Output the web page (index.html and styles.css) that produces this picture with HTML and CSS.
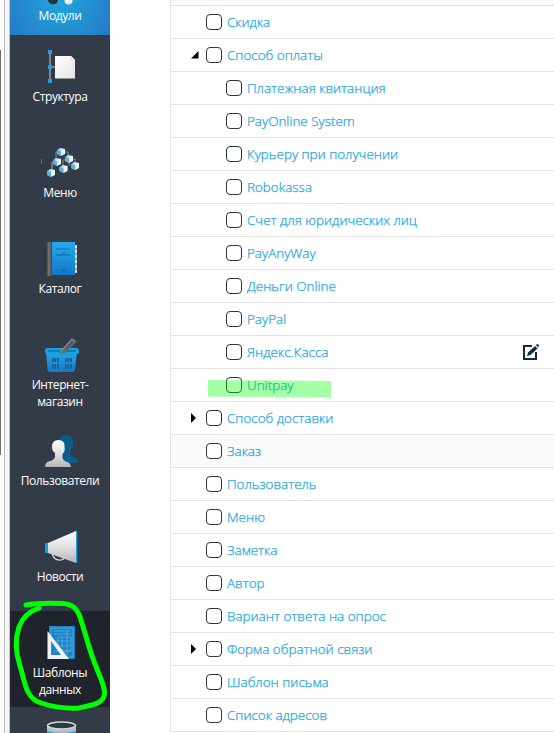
FILE: index.html
```html
<!DOCTYPE html>
<html lang="ru">
<head>
<meta charset="utf-8">
<title>Шаблоны данных</title>
<link rel="stylesheet" href="styles.css">
</head>
<body>
<svg class="defs" width="0" height="0" aria-hidden="true">
  <defs>
    <linearGradient id="blue" x1="0" y1="0" x2="0" y2="1"><stop offset="0" stop-color="#27aaf0"/><stop offset="1" stop-color="#1478c4"/></linearGradient>
    <linearGradient id="cube" x1="0" y1="0" x2="1" y2="0"><stop offset="0" stop-color="#4fa9d6"/><stop offset=".6" stop-color="#d9effb"/><stop offset="1" stop-color="#fff"/></linearGradient>
    <linearGradient id="silver" x1="0" y1="0" x2="0" y2="1"><stop offset="0" stop-color="#fff"/><stop offset=".55" stop-color="#ddd"/><stop offset="1" stop-color="#b5b5b5"/></linearGradient>
    <linearGradient id="page" x1="0" y1="0" x2="1" y2="1"><stop offset="0" stop-color="#fff"/><stop offset="1" stop-color="#e4e4e4"/></linearGradient>
    <linearGradient id="steel" x1="0" y1="0" x2="1" y2="0"><stop offset="0" stop-color="#333"/><stop offset=".5" stop-color="#777"/><stop offset="1" stop-color="#444"/></linearGradient>
    <g id="box"><path d="M0 2 3 0 8 1 8 6 4 8 0 6z" fill="url(#cube)"/><path d="M0 2 4 3.4 4 8 0 6z" fill="#5bafd8"/></g>
  </defs>
</svg>
<div class="layout">
  <div class="rail"><div class="rail-thumb"></div></div>
  <div class="edge"></div>
  <nav class="sidebar">
    <a class="item current"><svg class="icon" viewBox="0 0 40 40"><circle cx="13" cy="22.500" r="5" fill="#263441"/><circle cx="28.500" cy="23.500" r="4" fill="#eee"/><path d="M24 20.500h6v2h-6z" fill="#333"/></svg><span>Модули</span></a>
    <a class="item"><svg class="icon" viewBox="0 0 40 40"><path d="M10 7v26M10 20h6" stroke="#999ca1" stroke-width="1.500"/><path d="M8 3h4v4H8zM8 18h4v4H8zM8 32h4v4H8z" fill="#18a4e5"/><path d="M15 9h16l4 4v18.500H15z" fill="url(#page)"/><path d="M31 9v4h4z" fill="#fff" stroke="#bbb" stroke-width=".5"/></svg><span>Структура</span></a>
    <a class="item"><svg class="icon" viewBox="0 0 40 40"><path d="M1.500 16v5" stroke="#7c828c" stroke-width=".7"/><g transform="translate(0 3)"><path d="M16 13V6h12v6M12 23v-7h4v-3M12 16v8M23 20v-6h6v6M29 13h6v7" fill="none" stroke="#848991"/><use href="#box" x="17" y="2"/><use href="#box" x="13" y="12"/><use href="#box" x="25" y="9"/><use href="#box" x="7" y="23"/><use href="#box" x="19.500" y="19"/><use href="#box" x="31" y="16"/></g></svg><span>Меню</span></a>
    <a class="item"><svg class="icon" viewBox="0 0 40 40"><path d="M34 6h3v28h-3z" fill="#ddd"/><path d="M34 10h3M34 15h3M34 20h3M34 25h3M34 30h3" stroke="#65717a"/><path d="M6 3h6v34H6z" fill="url(#steel)"/><path d="M12 3h23v33H12z" fill="url(#blue)"/><path d="M16 10h14M22 14h3M16 16h14M21 31h5M22 33h3" stroke="#096299" stroke-width=".9"/></svg><span>Каталог</span></a>
    <a class="item"><svg class="icon" viewBox="0 0 40 40"><path d="M6 16h31l-2 19q-.5 2-3 2H11q-3 0-3.500-2z" fill="url(#blue)"/><path d="M5 15q0-2 3-2h28q3 0 3 3v2q-3 2-6 2H10q-4 0-5-3z" fill="#14a5df"/><path d="M8 15h28v2H8z" fill="#087db8"/><path d="M12 23h7v4h-7zM25 23h7v4h-7zM12 29h7v5h-7zM25 29h7v5h-7z" fill="#1a5f93"/><path d="M14 22v13M16.500 22v13M27 22v13M29.500 22v13" stroke="#2794da" stroke-width=".7"/><path d="M20 18 32 5l3 2-12 11" fill="none" stroke="#66676a" stroke-width="2.500"/><path d="M20 17 32 4l3 2" fill="none" stroke="#aaa" stroke-width=".8"/></svg><span>Интернет-<br>магазин</span></a>
    <a class="item"><svg class="icon" viewBox="0 0 40 40"><g transform="translate(0 2)"><path d="M19 8q1-6 8-6 6 0 6 7 1 4-2 7l-1 4q0 3 5 5 4 1 3 5H20z" fill="#075e8a"/><path d="M12 14q0-7 6.500-7t6 7q1 4-2 7v4q1 3 5 4 3 1 3.500 5H5q0-5 5-6 4-1 5-4v-4q-3-2-3-6z" fill="url(#silver)"/></g></svg><span>Пользователи</span></a>
    <a class="item"><svg class="icon" viewBox="0 0 40 40"><path d="M12 26q2 8 9 7 4-1 5-5" fill="none" stroke="#ddd" stroke-width="1.200"/><path d="M8 16 36 4v32L8 26z" fill="url(#silver)"/><path d="M5 16h3v10H5zM36 4h1.300v32H36z" fill="#10a1df"/></svg><span>Новости</span></a>
    <a class="item active"><svg class="icon" viewBox="0 0 40 40"><path d="M9 3h26v33H9z" fill="#1b84c9"/><path d="M11 5h22v29H11zM14 8h17M14 11h17M18 14h13v14H18zM22 14v17M27 8v24M14 18h17M14 23h17M14 28h17" fill="none" stroke="#68b1df" stroke-width=".7"/><path fill-rule="evenodd" d="M7.500 8 29 36H7.500zm3.500 10v14h10z" fill="#f2f2f2"/></svg><span>Шаблоны<br>данных</span></a>
    <a class="item"><svg class="icon" viewBox="0 0 40 40"><path d="M7 6h29v34H7z" fill="#12aae3"/><path d="M7 7v5q14 4 29 0V7z" fill="#bbb"/><ellipse cx="21.500" cy="6.500" rx="14" ry="3.500" fill="#273b46" stroke="#d4d9dc" stroke-width="1.500"/></svg></a>
  </nav>
  <main class="tree">
    <div class="tree-head"></div>
    <div class="row"><i class="arrow"></i><i class="check"></i><span>Скидка</span></div>
    <div class="row"><svg class="arrow" viewBox="0 0 8 10"><path d="M7.500 1v7.500H0z"/></svg><i class="check"></i><span>Способ оплаты</span></div>
    <div class="row child"><i class="arrow"></i><i class="check"></i><span>Платежная квитанция</span></div>
    <div class="row child"><i class="arrow"></i><i class="check"></i><span>PayOnline System</span></div>
    <div class="row child"><i class="arrow"></i><i class="check"></i><span>Курьеру при получении</span></div>
    <div class="row child"><i class="arrow"></i><i class="check"></i><span>Robokassa</span></div>
    <div class="row child"><i class="arrow"></i><i class="check"></i><span>Счет для юридических лиц</span></div>
    <div class="row child"><i class="arrow"></i><i class="check"></i><span>PayAnyWay</span></div>
    <div class="row child"><i class="arrow"></i><i class="check"></i><span>Деньги Online</span></div>
    <div class="row child"><i class="arrow"></i><i class="check"></i><span>PayPal</span></div>
    <div class="row child"><i class="arrow"></i><i class="check"></i><span>Яндекс.Касса</span><svg class="edit" viewBox="0 0 16 16"><path d="M9 2H1v13h12V8" fill="none" stroke="#0c2d42" stroke-width="2"/><path d="M4 12 5 8.500 12 2l2.500 2.500L7.500 11zM13 1l1-1q2 0 2 2l-1 1.500z" fill="#0c2d42"/></svg></div>
    <div class="row child"><i class="arrow"></i><i class="check"></i><span>Unitpay</span><svg class="marker" viewBox="0 0 126 20"><path d="M1 1 124 2v16.500L1 17.500z"/></svg></div>
    <div class="row"><svg class="arrow" viewBox="0 0 8 10"><path d="M0 0 5 5 0 10z"/></svg><i class="check"></i><span>Способ доставки</span></div>
    <div class="row hover"><i class="arrow"></i><i class="check"></i><span>Заказ</span></div>
    <div class="row"><i class="arrow"></i><i class="check"></i><span>Пользователь</span></div>
    <div class="row"><i class="arrow"></i><i class="check"></i><span>Меню</span></div>
    <div class="row"><i class="arrow"></i><i class="check"></i><span>Заметка</span></div>
    <div class="row"><i class="arrow"></i><i class="check"></i><span>Автор</span></div>
    <div class="row"><i class="arrow"></i><i class="check"></i><span>Вариант ответа на опрос</span></div>
    <div class="row"><svg class="arrow" viewBox="0 0 8 10"><path d="M0 0 5 5 0 10z"/></svg><i class="check"></i><span>Форма обратной связи</span></div>
    <div class="row"><i class="arrow"></i><i class="check"></i><span>Шаблон письма</span></div>
    <div class="row"><i class="arrow"></i><i class="check"></i><span>Список адресов</span></div>
  </main>
</div>
<svg class="scribble" viewBox="0 0 100 120"><path d="M16 10C25 8 40 8 52 8.500 63 9 67 14 70 22 76 40 80 58 87 74 92 87 95 92 94.500 99 93 110 80 110 69 113 55 114 43 112 31 108 15 103 15 86 10 71 5 56 5 44 9 32 13 21 20 16 29 13"/></svg>
</body>
</html>
```

FILE: styles.css
```css
* { box-sizing: border-box; }
body { margin: 0; background: #fff; font-family: "Open Sans", sans-serif; overflow: hidden; }
.defs { position: absolute; }
.layout { display: flex; height: 733px; overflow: hidden; }
.rail { width: 4px; padding-top: 50px; }
.rail-thumb { width: 1px; height: 405px; background: #6d6d6d; }
.edge { width: 6px; background: #f5f5f5; border-left: 1px solid #bababa; border-right: 1px solid #c4c4c4; }
.sidebar { width: 100px; margin-top: -61px; flex: none; background: #343b48; }
.item { display: flex; flex-direction: column; align-items: center; height: 96px; padding-top: 12px; color: #fff; font-size: 12px; letter-spacing: -.4px; line-height: 17px; text-align: center; }
.item span { margin-top: 1px; white-space: nowrap; }
.icon { width: 40px; height: 40px; flex: none; overflow: visible; }
.current { padding-top: 27px; background: radial-gradient(circle at 50% 65%, #20a5dc, #2777c3 65px); }
.current .icon { position: relative; top: 11px; }
.active { background: #1f232b; }
.tree { flex: none; width: 384px; height: 732px; margin-left: 60px; border-left: 1px solid #e3e3e3; }
.tree-head { height: 6px; background: linear-gradient(#f8f8f8, #fff 3px); border-bottom: 1px solid #e3e3e3; }
.row { position: relative; display: flex; align-items: center; height: 33px; padding-left: 20px; border-bottom: 1px solid #e3e3e3; color: #1ca6e2; font-size: 13.45px; font-weight: 300; line-height: 20px; white-space: nowrap; -webkit-text-stroke: .25px #1ca6e2; }
.child { padding-left: 40px; }
.hover { background: #fafafa; }
.arrow { width: 8px; height: 10px; margin-right: 7px; flex: none; fill: #000; }
.check { width: 16px; height: 16px; margin-right: 5px; flex: none; border: 1px solid #2b3544; border-radius: 4px; background: #fff; }
.edit { width: 16px; height: 16px; margin-left: auto; margin-right: 15px; }
.marker { position: absolute; left: 36px; top: 10px; width: 126px; height: 20px; fill: #00ff00; opacity: .35; }
.scribble { position: absolute; left: 10px; top: 595px; width: 100px; height: 120px; fill: none; stroke: #00ff00; stroke-width: 5; stroke-linecap: round; stroke-linejoin: round; }
```
